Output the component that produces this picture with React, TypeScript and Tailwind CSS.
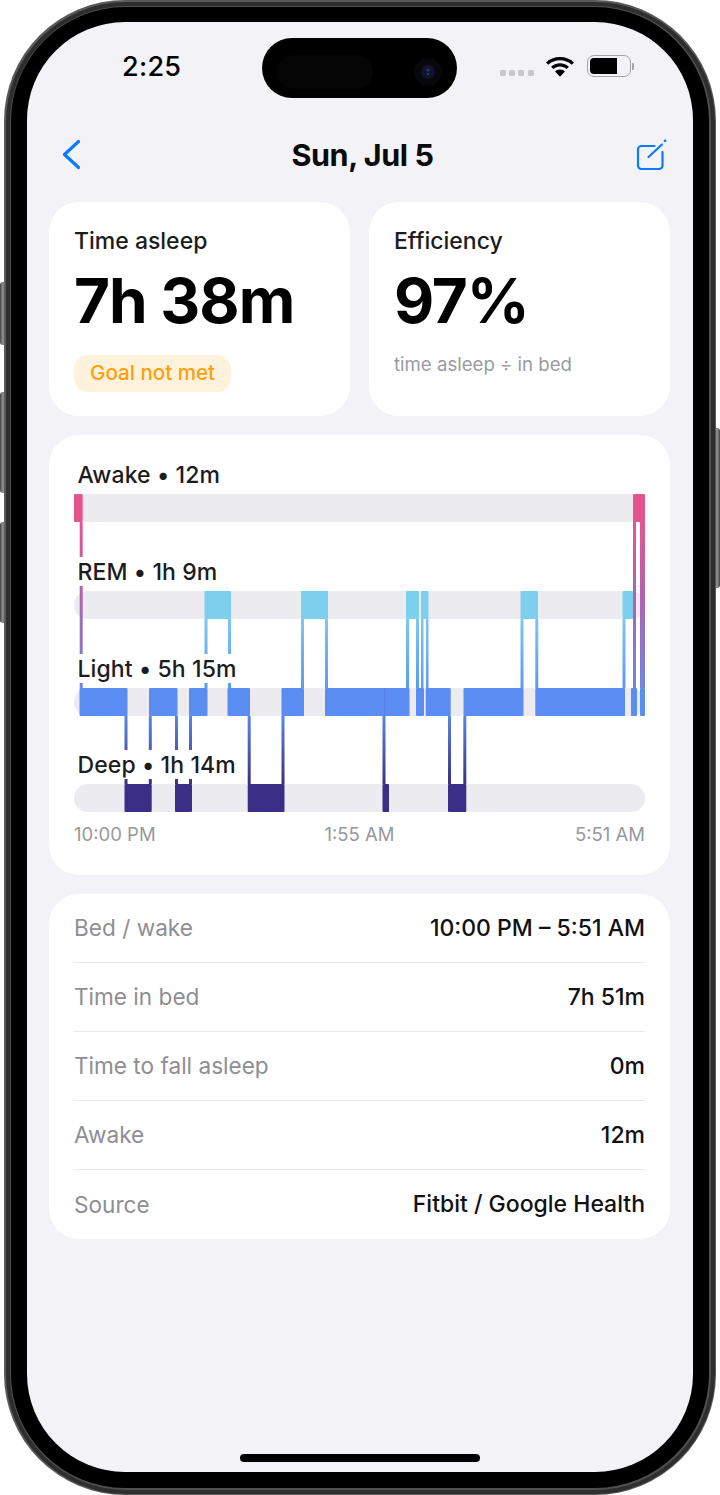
import React from "react";

const font = { fontFamily: "Inter, 'Liberation Sans', sans-serif" };

const awake: [number, number][] = [[74, 82.7], [633, 645]];
const rem: [number, number][] = [[204.5, 231], [301, 328], [406, 419], [421, 428.5], [520.5, 538], [622.5, 633]];
const light: [number, number][] = [[79.5, 127.5], [149, 177.5], [189, 207.5], [227.5, 250], [281.5, 304], [325, 409.5], [416, 424], [425.7, 450.7], [463.5, 523.5], [535.3, 625], [631, 637], [640, 645]];
const deep: [number, number][] = [[124.5, 151.7], [175, 192], [247.7, 284.5], [382.5, 389], [448, 466.3]];

const topLinks: [number, number][] = [[79.7, 3]];
const remLinks: [number, number][] = [[204.5, 3], [228, 3], [301, 3], [325, 3], [406, 3], [416, 3], [421, 2.5], [426, 2.5], [520.5, 3], [535.3, 3], [622.5, 3]];
const deepLinks: [number, number][] = [[124.5, 3], [148.8, 3], [175, 3], [189, 3], [247.7, 3], [281.5, 3], [382.5, 3], [448, 3], [463.3, 3]];

const ORIGIN_X = 74;
const ORIGIN_Y = 490;

function Hypnogram() {
  const x = (v: number) => v - ORIGIN_X;
  const y = (v: number) => v - ORIGIN_Y;
  return (
    <svg className="absolute left-0 top-[30px] block" width="571" height="330" viewBox="0 0 571 330">
      <defs>
        <linearGradient id="g1" gradientUnits="userSpaceOnUse" x1="0" y1="32" x2="0" y2="198">
          <stop offset="0" stopColor="#e5568f" />
          <stop offset="0.45" stopColor="#b062ad" />
          <stop offset="1" stopColor="#6f86e2" />
        </linearGradient>
        <linearGradient id="g2" gradientUnits="userSpaceOnUse" x1="0" y1="129" x2="0" y2="198">
          <stop offset="0" stopColor="#7fc6f2" />
          <stop offset="1" stopColor="#5b9bf0" />
        </linearGradient>
        <linearGradient id="g3" gradientUnits="userSpaceOnUse" x1="0" y1="226" x2="0" y2="294">
          <stop offset="0" stopColor="#5a86e6" />
          <stop offset="1" stopColor="#3a2f88" />
        </linearGradient>
      </defs>
      {topLinks.map(([a, w], i) => (
        <rect key={i} x={x(a)} y={y(522)} width={w} height={166} fill="url(#g1)" />
      ))}
      <rect x={x(633)} y={y(522)} width={3} height={166} fill="url(#g1)" />
      <rect x={x(640)} y={y(522)} width={5} height={166} fill="url(#g1)" />
      {remLinks.map(([a, w], i) => (
        <rect key={i} x={x(a)} y={y(619)} width={w} height={69} fill="url(#g2)" />
      ))}
      {deepLinks.map(([a, w], i) => (
        <rect key={i} x={x(a)} y={y(716)} width={w} height={68} fill="url(#g3)" />
      ))}
      {awake.map(([a, b], i) => (
        <rect key={i} x={x(a)} y={y(494)} width={b - a} height={28} rx={1} fill="#e5558d" />
      ))}
      {rem.map(([a, b], i) => (
        <rect key={i} x={x(a)} y={y(591)} width={b - a} height={28} rx={1} fill="#7dcfee" />
      ))}
      {light.map(([a, b], i) => (
        <rect key={i} x={x(a)} y={y(688)} width={b - a} height={28} rx={1} fill="#5a8cf1" />
      ))}
      <rect x={x(384)} y={y(688)} width={1} height={28} fill="#5480e6" />
      {deep.map(([a, b], i) => (
        <rect key={i} x={x(a)} y={y(784)} width={b - a} height={28} rx={1} fill="#3b2e87" />
      ))}
    </svg>
  );
}

function Track({ label, className }: { label: string; className: string }) {
  return (
    <div className={"flex flex-col " + className}>
      <div className="relative z-10 h-[29px] self-start bg-white pl-[3.5px] pr-1 text-[23px] leading-[31px] font-medium tracking-[0.1px] text-[#1c1c1e]">
        {label}
      </div>
      <div className="mt-[5px] h-[28px] rounded-full bg-[#ecebf0]" />
    </div>
  );
}

function Row({ k, v, last }: { k: string; v: string; last?: boolean }) {
  return (
    <div className={"flex h-[69px] items-center justify-between " + (last ? "" : "border-b border-[#e9e9ee]")}>
      <span className="text-[22.6px] text-[#8e8e93]">{k}</span>
      <span className="text-[23px] font-medium text-[#111113]">{v}</span>
    </div>
  );
}

function Dot() {
  return <span className="h-[6px] w-[6px] rounded-[1.5px] bg-[#c7c7cc]" />;
}

export default function App() {
  return (
    <div className="relative h-[1495px] w-[720px] overflow-hidden bg-white" style={font}>
      {/* side buttons */}
      <div className="absolute left-0 top-[282px] h-[63px] w-[6px] rounded-l-[3px] bg-gradient-to-r from-[#444] via-[#9a9a9a] to-[#222]" />
      <div className="absolute left-0 top-[392px] h-[101px] w-[6px] rounded-l-[3px] bg-gradient-to-r from-[#444] via-[#9a9a9a] to-[#222]" />
      <div className="absolute left-0 top-[522px] h-[101px] w-[6px] rounded-l-[3px] bg-gradient-to-r from-[#444] via-[#9a9a9a] to-[#222]" />
      <div className="absolute right-0 top-[428px] h-[160px] w-[6px] rounded-r-[3px] bg-gradient-to-l from-[#444] via-[#9a9a9a] to-[#222]" />

      {/* frame */}
      <div className="absolute left-[4px] top-0 h-[1495px] w-[712px] rounded-[121px] bg-[#5a5a5a] p-[1.5px]">
        <div className="h-full w-full rounded-[120px] bg-[#2e2e2e] p-[4px]">
          <div className="h-full w-full rounded-[116px] bg-[#4e4e4e] p-[1.5px]">
            <div className="h-full w-full rounded-[114px] bg-black px-[16px] pb-[16px] pt-[15px]">
              {/* screen */}
              <div className="relative h-full w-full overflow-hidden rounded-[98px] bg-[#f2f2f7]">
                {/* dynamic island */}
                <div className="absolute left-[235px] top-[16px] flex h-[60px] w-[195px] items-center justify-end rounded-full bg-black pr-[14px]">
                  <div className="absolute left-[15px] top-[17px] h-[34px] w-[96px] rounded-full bg-[#050506]" />
                  <svg width="30" height="30" viewBox="0 0 30 30" className="relative mt-[7px]">
                    <circle cx="15" cy="15" r="14" fill="#08080c" />
                    <circle cx="15" cy="15" r="7" fill="#10132e" />
                    <circle cx="15" cy="13" r="1.5" fill="#2a3a80" />
                    <circle cx="15" cy="17" r="1.2" fill="#1d4a5a" />
                  </svg>
                </div>

                {/* status bar */}
                <div className="flex h-[90px] items-start justify-between pl-[95px] pr-[59px] pt-[27px]">
                  <span className="text-[27px] font-medium leading-[36px] tracking-[0.3px] text-black">2:25</span>
                  <div className="flex items-center gap-[8px] pt-[5px]">
                    <div className="mt-[14px] flex gap-[3.3px]">
                      <Dot />
                      <Dot />
                      <Dot />
                      <Dot />
                    </div>
                    <svg width="30" height="24" viewBox="0 0 30 24" className="ml-[3px]">
                      <path d="M15 3C9.5 3 4.7 5 1 8.4l2.2 2.4C6.4 8 10.5 6.3 15 6.3s8.6 1.7 11.8 4.5L29 8.4C25.3 5 20.5 3 15 3z" fill="#000" />
                      <path d="M15 9.3c-3.4 0-6.5 1.3-8.9 3.4l2.2 2.4c1.8-1.6 4.1-2.6 6.7-2.6s4.9 1 6.7 2.6l2.2-2.4c-2.4-2.1-5.5-3.4-8.9-3.4z" fill="#000" />
                      <path d="M15 15.5c-1.9 0-3.6.7-4.9 1.9L15 22.8l4.9-5.4c-1.3-1.2-3-1.9-4.9-1.9z" fill="#000" />
                    </svg>
                    <div className="ml-[4px] flex items-center">
                      <div className="flex h-[22px] w-[44px] items-center rounded-[7px] border-[1.5px] border-[#a5a5a8] p-[2px]">
                        <div className="h-full w-[27px] rounded-l-[4px] bg-black" />
                      </div>
                      <div className="ml-[1.5px] h-[7px] w-[2px] rounded-r-[1px] bg-[#a5a5a8]" />
                    </div>
                  </div>
                </div>

                {/* nav */}
                <div className="flex h-[90px] items-start justify-between pl-[35px] pr-[25px] pt-[23px]">
                  <svg width="18" height="31" viewBox="0 0 18 31" className="mt-[4px]">
                    <path d="M16.5 2.5 L2.5 15.5 L16.5 28.5" fill="none" stroke="#0a7aff" strokeWidth="3.2" strokeLinecap="round" strokeLinejoin="round" />
                  </svg>
                  <span className="ml-[9px] text-[30.5px] font-bold leading-[40px] text-[#0b0b0c]" style={{ letterSpacing: "-0.4px" }}>
                    Sun, Jul 5
                  </span>
                  <svg width="32" height="32" viewBox="0 0 32 32" className="mt-[3px]">
                    <path d="M18.5 8 H5.5 a3.5 3.5 0 0 0 -3.5 3.5 V27.5 a3.5 3.5 0 0 0 3.5 3.5 H23 a3.5 3.5 0 0 0 3.5 -3.5 V14" fill="none" stroke="#0a7aff" strokeWidth="2.2" strokeLinecap="round" />
                    <path d="M12.5 19 L26 6.5" fill="none" stroke="#0a7aff" strokeWidth="2.2" strokeLinecap="round" />
                    <circle cx="29" cy="2.8" r="1.4" fill="#0a7aff" />
                  </svg>
                </div>

                <div className="flex flex-col gap-[19px] pl-[22px] pr-[23px]">
                  {/* top cards */}
                  <div className="grid h-[214px] grid-cols-2 gap-[19px]">
                    <div className="rounded-[30px] bg-white pl-[25px] pt-[22px]">
                      <div className="text-[23px] font-medium leading-[34px] text-[#1c1c1e]">Time asleep</div>
                      <div className="mt-[7px] text-[62px] font-bold leading-[72px] text-black" style={{ letterSpacing: "-1px" }}>7h 38m</div>
                      <div className="mt-[18px] inline-flex h-[37px] items-center rounded-[14px] bg-[#fff2dd] px-[16px] text-[20.6px] font-medium text-[#ff9f0a]">
                        Goal not met
                      </div>
                    </div>
                    <div className="rounded-[30px] bg-white pl-[25px] pt-[22px]">
                      <div className="text-[23px] font-medium leading-[34px] text-[#1c1c1e]">Efficiency</div>
                      <div className="mt-[7px] text-[62px] font-bold leading-[72px] text-black" style={{ letterSpacing: "-1.2px" }}>97%</div>
                      <div className="mt-[9px] text-[18.6px] leading-[37px] text-[#9a9a9f]">time asleep ÷ in bed</div>
                    </div>
                  </div>

                  {/* chart card */}
                  <div className="h-[440px] rounded-[30px] bg-white px-[25px] pt-[25px]">
                    <div className="relative">
                      <Track label="Awake • 12m" className="h-[97px]" />
                      <Track label="REM • 1h 9m" className="h-[97px]" />
                      <Track label="Light • 5h 15m" className="h-[96px]" />
                      <Track label="Deep • 1h 14m" className="h-[62px]" />
                      <Hypnogram />
                      <div className="mt-[10px] grid grid-cols-3 text-[18.5px] leading-[24px] text-[#98989d]">
                        <span>10:00 PM</span>
                        <span className="text-center">1:55 AM</span>
                        <span className="text-right">5:51 AM</span>
                      </div>
                    </div>
                  </div>

                  {/* details */}
                  <div className="rounded-[30px] bg-white px-[25px]">
                    <Row k="Bed / wake" v="10:00 PM – 5:51 AM" />
                    <Row k="Time in bed" v="7h 51m" />
                    <Row k="Time to fall asleep" v="0m" />
                    <Row k="Awake" v="12m" />
                    <Row k="Source" v="Fitbit / Google Health" last />
                  </div>
                </div>

                {/* home indicator */}
                <div className="absolute bottom-[10px] left-[213px] h-[8px] w-[240px] rounded-full bg-black" />
              </div>
            </div>
          </div>
        </div>
      </div>
    </div>
  );
}
